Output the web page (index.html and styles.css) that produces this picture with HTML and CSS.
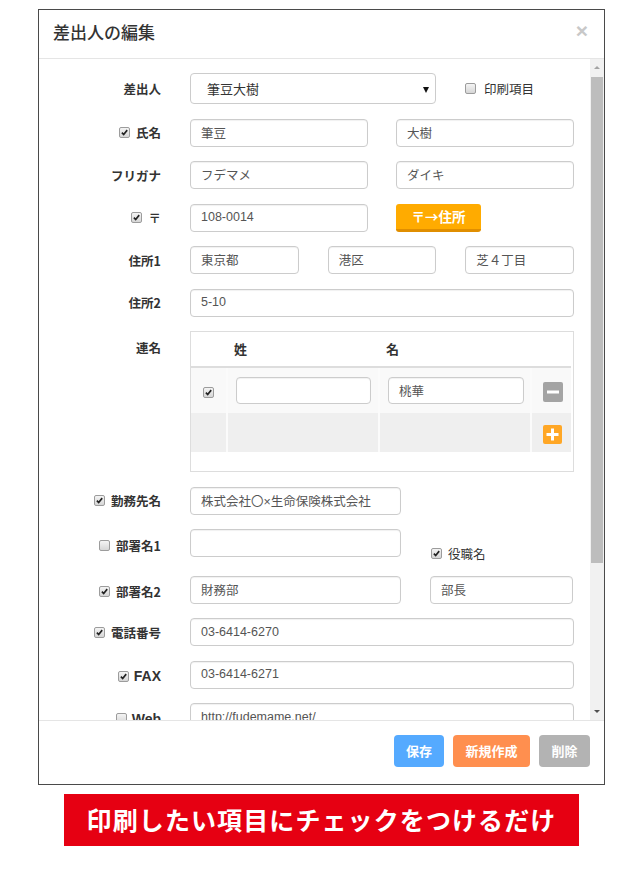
FILE: index.html
```html
<!DOCTYPE html>
<html lang="ja">
<head>
<meta charset="utf-8">
<title>差出人の編集</title>
<link rel="stylesheet" href="styles.css">
</head>
<body>
<div class="modal">
  <div class="modal-header">
    <h4 class="title">差出人の編集</h4>
    <span class="close">×</span>
  </div>
  <div class="modal-main">
    <div class="modal-body">
      <div class="row">
        <div class="lbl">差出人</div>
        <div class="fields">
          <div class="select">筆豆大樹<span class="caret"></span></div>
          <div class="print"><span class="cb"></span>印刷項目</div>
        </div>
      </div>
      <div class="row">
        <div class="lbl"><span class="cb on"><svg viewBox="0 0 11 11"><path d="M2.3 5.6 L4.5 8 L8.8 2.6"/></svg></span>氏名</div>
        <div class="fields">
          <div class="input half">筆豆</div>
          <div class="input half">大樹</div>
        </div>
      </div>
      <div class="row">
        <div class="lbl">フリガナ</div>
        <div class="fields">
          <div class="input half">フデマメ</div>
          <div class="input half">ダイキ</div>
        </div>
      </div>
      <div class="row">
        <div class="lbl"><span class="cb on"><svg viewBox="0 0 11 11"><path d="M2.3 5.6 L4.5 8 L8.8 2.6"/></svg></span>〒</div>
        <div class="fields">
          <div class="input half">108-0014</div>
          <div class="btn-zip">〒→住所</div>
        </div>
      </div>
      <div class="row">
        <div class="lbl">住所1</div>
        <div class="fields">
          <div class="input third">東京都</div>
          <div class="input third">港区</div>
          <div class="input third">芝４丁目</div>
        </div>
      </div>
      <div class="row">
        <div class="lbl">住所2</div>
        <div class="fields">
          <div class="input full">5-10</div>
        </div>
      </div>
      <div class="row row-top">
        <div class="lbl lbl-top">連名</div>
        <div class="fields">
          <div class="table-wrap">
            <div class="trow thead">
              <div class="c1"></div>
              <div class="c2">姓</div>
              <div class="c3">名</div>
              <div class="c4"></div>
            </div>
            <div class="trow tr1">
              <div class="c1"><span class="cb on"><svg viewBox="0 0 11 11"><path d="M2.3 5.6 L4.5 8 L8.8 2.6"/></svg></span></div>
              <div class="c2"><div class="input cell"></div></div>
              <div class="c3"><div class="input cell">桃華</div></div>
              <div class="c4"><span class="ibtn minus"><svg viewBox="0 0 20 20"><rect x="4" y="8.5" width="12" height="3" fill="#fff"/></svg></span></div>
            </div>
            <div class="trow tr2">
              <div class="c1"></div>
              <div class="c2"></div>
              <div class="c3"></div>
              <div class="c4"><span class="ibtn plus"><svg viewBox="0 0 19 19"><rect x="3.5" y="8" width="12" height="3" fill="#fff"/><rect x="8" y="3.5" width="3" height="12" fill="#fff"/></svg></span></div>
            </div>
          </div>
        </div>
      </div>
      <div class="row">
        <div class="lbl"><span class="cb on"><svg viewBox="0 0 11 11"><path d="M2.3 5.6 L4.5 8 L8.8 2.6"/></svg></span>勤務先名</div>
        <div class="fields">
          <div class="input wide">株式会社〇×生命保険株式会社</div>
        </div>
      </div>
      <div class="row row-dept1">
        <div class="lbl lbl-low"><span class="cb"></span>部署名1</div>
        <div class="fields">
          <div class="input wide"></div>
          <div class="yaku"><span class="cb on"><svg viewBox="0 0 11 11"><path d="M2.3 5.6 L4.5 8 L8.8 2.6"/></svg></span>役職名</div>
        </div>
      </div>
      <div class="row">
        <div class="lbl lbl-low"><span class="cb on"><svg viewBox="0 0 11 11"><path d="M2.3 5.6 L4.5 8 L8.8 2.6"/></svg></span>部署名2</div>
        <div class="fields">
          <div class="input wide">財務部</div>
          <div class="input narrow">部長</div>
        </div>
      </div>
      <div class="row">
        <div class="lbl"><span class="cb on"><svg viewBox="0 0 11 11"><path d="M2.3 5.6 L4.5 8 L8.8 2.6"/></svg></span>電話番号</div>
        <div class="fields">
          <div class="input full">03-6414-6270</div>
        </div>
      </div>
      <div class="row">
        <div class="lbl lbl-low lbl-latin"><span class="cb on"><svg viewBox="0 0 11 11"><path d="M2.3 5.6 L4.5 8 L8.8 2.6"/></svg></span>FAX</div>
        <div class="fields">
          <div class="input full">03-6414-6271</div>
        </div>
      </div>
      <div class="row">
        <div class="lbl lbl-low lbl-latin"><span class="cb"></span>Web</div>
        <div class="fields">
          <div class="input full">http://fudemame.net/</div>
        </div>
      </div>
    </div>
    <div class="scrollbar">
      <span class="arrow-up"></span>
      <div class="track"><div class="thumb"></div></div>
      <span class="arrow-down"></span>
    </div>
  </div>
  <div class="modal-footer">
    <button class="btn btn-save">保存</button>
    <button class="btn btn-new">新規作成</button>
    <button class="btn btn-del">削除</button>
  </div>
</div>
<div class="banner">印刷したい項目にチェックをつけるだけ</div>
</body>
</html>
```
FILE: styles.css
```css
* { box-sizing: border-box; }
html, body { margin: 0; padding: 0; background: #fff; }
body {
  font-family: "Noto Sans CJK JP", "Liberation Sans", sans-serif;
  color: #333;
  padding-top: 9px;
}
.modal {
  margin-left: 38px;
  width: 567px;
  height: 776px;
  border: 1px solid #4a4a4a;
  display: flex;
  flex-direction: column;
  background: #fff;
}
.modal-header {
  height: 49px;
  border-bottom: 1px solid #e5e5e5;
  display: flex;
  align-items: center;
  justify-content: space-between;
  padding: 0 16px 6px 14px;
  flex: none;
}
.title {
  margin: 0;
  font-size: 17px;
  font-weight: 500;
  color: #333;
}
.close {
  font-family: "Liberation Sans", sans-serif;
  font-size: 21px;
  color: #c8c8c8;
  line-height: 1;
  font-weight: bold;
  margin-bottom: 2px;
}
.modal-main {
  height: 661px;
  display: flex;
  flex: none;
}
.modal-body {
  flex: 1;
  overflow: hidden;
  padding-top: 14px;
  display: flex;
  flex-direction: column;
  gap: 14.5px;
}
.row {
  display: flex;
  align-items: center;
  flex: none;
}
.row-top { align-items: flex-start; }
.row-dept1 { height: 32px; align-items: flex-start; }
.lbl {
  width: 122px;
  display: flex;
  justify-content: flex-end;
  align-items: center;
  gap: 6px;
  font-size: 12.5px;
  font-weight: bold;
  color: #333;
  flex: none;
}
.lbl-top { padding-top: 7px; }
.row-dept1 .lbl { height: 28px; padding-top: 5px; }
.lbl-low { padding-top: 3px; }
.lbl-latin { font-family: "Liberation Sans", "Noto Sans CJK JP", sans-serif; font-size: 14px; gap: 5px; }
.fields {
  margin-left: 29px;
  width: 384px;
  display: flex;
  align-items: center;
  gap: 28px;
  flex: none;
}
.input {
  height: 28px;
  border: 1px solid #ccc;
  border-radius: 4px;
  box-shadow: inset 0 1px 1px rgba(0,0,0,0.06);
  padding: 0 10px 1px;
  display: flex;
  align-items: center;
  font-family: "Liberation Sans", "Noto Sans CJK JP", sans-serif;
  font-size: 12.5px;
  color: #555;
  background: #fff;
  white-space: nowrap;
}
.half { width: 178px; }
.third { flex: 1; }
.fields:has(.third) { gap: 29px; }
.full { width: 384px; }
.wide { width: 211px; }
.narrow { width: 143px; }
.fields:has(.wide) { gap: 29px; }
.select {
  width: 246px;
  height: 31px;
  border: 1px solid #ccc;
  border-radius: 4px;
  display: flex;
  align-items: center;
  padding: 0 0 0 16px;
  font-size: 13px;
  color: #333;
  position: relative;
}
.caret {
  position: absolute;
  right: 6px;
  top: 13px;
  width: 0;
  height: 0;
  border-left: 3.5px solid transparent;
  border-right: 3.5px solid transparent;
  border-top: 6px solid #111;
}
.print {
  margin-left: 1px;
  display: flex;
  align-items: center;
  gap: 8px;
  font-size: 12.5px;
  color: #333;
}
.cb {
  width: 11px;
  height: 11px;
  border: 1px solid #9c9c9c;
  border-radius: 2px;
  background: linear-gradient(#f4f4f4, #d6d6d6);
  display: inline-flex;
  flex: none;
}
.cb svg { width: 9px; height: 9px; }
.cb svg path { fill: none; stroke: #222; stroke-width: 2; }
.btn-zip {
  width: 85px;
  height: 28px;
  background: #ffab00;
  border-bottom: 3px solid #e08e00;
  border-radius: 3px;
  color: #fff;
  font-weight: bold;
  font-size: 13.5px;
  display: flex;
  align-items: center;
  justify-content: center;
  padding-bottom: 1px;
}
.table-wrap {
  width: 384px;
  height: 141px;
  border: 1px solid #ddd;
}
.trow {
  display: flex;
  width: 380px;
}
.c1 { width: 35px; flex: none; display: flex; align-items: center; justify-content: center; }
.c2, .c3 { width: 152px; flex: none; display: flex; align-items: center; padding-left: 8px; }
.c4 { flex: 1; display: flex; align-items: center; justify-content: center; padding-left: 2px; }
.thead { height: 36px; border-bottom: 2px solid #ddd; font-size: 13px; font-weight: bold; }
.thead .c2, .thead .c3 { padding-left: 8px; padding-bottom: 2px; }
.tr1 { height: 45px; background: #f9f9f9; }
.tr2 { height: 39px; background: #efefef; }
.tr1 > div + div, .tr2 > div + div { border-left: 2px solid #fbfbfb; }
.tr1 .c1 { padding-top: 4px; }
.cell { width: 135px; height: 27px; margin-top: 0; }
.tr1 .c3 .cell { width: 136px; }
.ibtn { display: inline-flex; border-radius: 2px; }
.ibtn svg { display: block; }
.minus { width: 20px; height: 20px; background: #a4a4a4; margin-top: 3px; }
.minus svg { width: 20px; height: 20px; }
.plus { width: 19px; height: 19px; background: #ffa726; margin-top: 3px; }
.plus svg { width: 19px; height: 19px; }
.yaku {
  align-self: flex-end;
  margin-top: 16px;
  margin-left: 1px;
  display: flex;
  align-items: center;
  gap: 6px;
  font-size: 12.5px;
  color: #333;
  height: 16px;
}
.row-dept1 .fields { align-items: flex-start; }
.scrollbar {
  width: 14px;
  flex: none;
  background: #f1f1f1;
  display: flex;
  flex-direction: column;
  align-items: center;
  padding: 5px 0 5px;
}
.arrow-up, .arrow-down {
  width: 0;
  height: 0;
  border-left: 3px solid transparent;
  border-right: 3px solid transparent;
  flex: none;
}
.arrow-up { border-bottom: 3px solid #a3a3a3; margin: 2px 0 8px; }
.arrow-down { border-top: 3px solid #505050; margin: 0 0 2px; }
.track { flex: 1; width: 100%; padding: 0 1px; }
.thumb { height: 486px; background: #bdbdbd; margin-top: 0; }
.modal-footer {
  flex: 1;
  border-top: 1px solid #e5e5e5;
  display: flex;
  justify-content: flex-end;
  align-items: flex-start;
  gap: 9px;
  padding: 14px 14px 0 0;
}
.btn {
  height: 32px;
  border: none;
  border-radius: 4px;
  color: #fff;
  font-family: "Noto Sans CJK JP", sans-serif;
  font-weight: bold;
  font-size: 13px;
  padding: 0 12px 2px;
}
.btn-save { background: #55aaff; width: 50px; }
.btn-new { background: #ff8f4f; width: 77px; }
.btn-del { background: #b3b3b3; width: 51px; }
.banner {
  margin: 9px 0 0 64px;
  width: 515px;
  height: 52px;
  background: #e60012;
  color: #fff;
  font-size: 25px;
  font-weight: bold;
  display: flex;
  align-items: center;
  justify-content: center;
  letter-spacing: 1.1px;
  padding-bottom: 2px;
}
```
